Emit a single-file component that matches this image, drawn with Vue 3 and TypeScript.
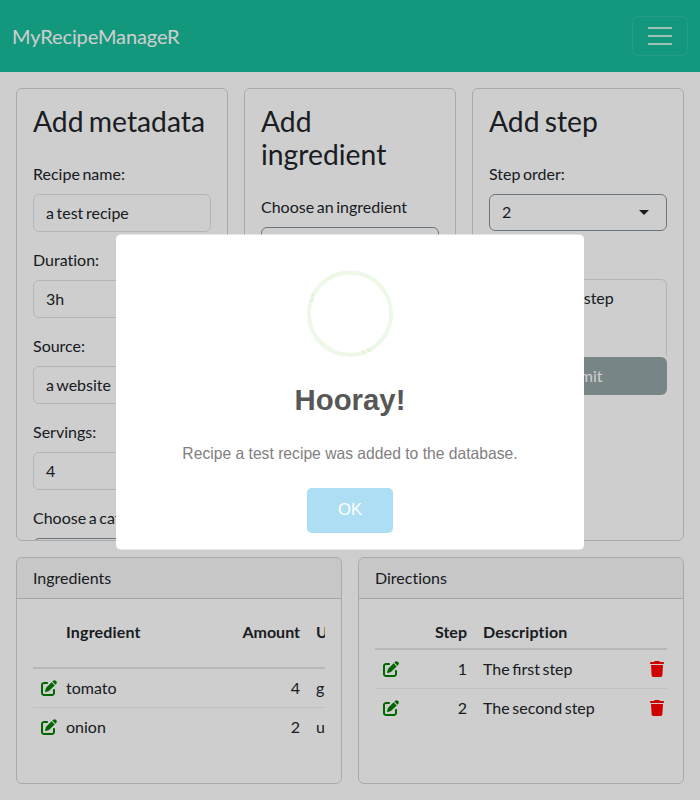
<script setup lang="ts">
interface Field {
  label: string
  value: string
}
interface Ingredient {
  name: string
  amount: number
  unit: string
}

const fields: Field[] = [
  { label: 'Recipe name:', value: 'a test recipe' },
  { label: 'Duration:', value: '3h' },
  { label: 'Source:', value: 'a website' },
  { label: 'Servings:', value: '4' },
]
const ingredients: Ingredient[] = [
  { name: 'tomato', amount: 4, unit: 'g' },
  { name: 'onion', amount: 2, unit: 'unit' },
]
const steps: string[] = ['The first step', 'The second step']

const penPath =
  'M471.6 21.7c-21.9-21.9-57.3-21.9-79.2 0L362.3 51.7l97.9 97.9 30.1-30.1c21.9-21.9 21.9-57.3 0-79.2L471.6 21.7zm-299.2 220c-6.1 6.1-10.8 13.6-13.5 21.9l-29.6 88.8c-2.9 8.6-.6 18.1 5.8 24.6s15.9 8.7 24.6 5.8l88.8-29.6c8.2-2.7 15.7-7.4 21.9-13.5L437.7 172.3 339.7 74.3 172.4 241.7zM96 64C43 64 0 107 0 160V416c0 53 43 96 96 96H352c53 0 96-43 96-96V320c0-17.7-14.3-32-32-32s-32 14.3-32 32v96c0 17.7-14.3 32-32 32H96c-17.7 0-32-14.3-32-32V160c0-17.7 14.3-32 32-32h96c17.7 0 32-14.3 32-32s-14.3-32-32-32H96z'
const trashPath =
  'M135.2 17.7L128 32H32C14.3 32 0 46.3 0 64S14.3 96 32 96H416c17.7 0 32-14.3 32-32s-14.3-32-32-32H320l-7.2-14.3C307.4 6.8 296.3 0 284.2 0H163.8c-12.1 0-23.2 6.8-28.6 17.7zM416 128H32L53.2 467c1.6 25.3 22.6 45 47.9 45H346.9c25.3 0 46.3-19.7 47.9-45L416 128z'
</script>

<template>
  <div class="page">
    <nav class="navbar">
      <span class="brand">MyRecipeManageR</span>
      <button class="toggler" type="button">
        <svg width="30" height="30" viewBox="0 0 30 30">
          <path d="M3 7h24M3 15h24M3 23h24" stroke="#fff" stroke-opacity=".75" stroke-width="2" />
        </svg>
      </button>
    </nav>

    <main class="content">
      <section class="forms">
        <div class="card form-card">
          <h2>Add metadata</h2>
          <div v-for="f in fields" :key="f.label" class="group">
            <label>{{ f.label }}</label>
            <div class="control">{{ f.value }}</div>
          </div>
          <div class="group">
            <label>Choose a category</label>
            <div class="control select"></div>
          </div>
        </div>

        <div class="card form-card">
          <h2>Add ingredient</h2>
          <div class="group">
            <label>Choose an ingredient</label>
            <div class="control select"></div>
          </div>
        </div>

        <div class="card form-card">
          <h2>Add step</h2>
          <div class="group">
            <label>Step order:</label>
            <div class="control select"><span>2</span><i class="caret"></i></div>
          </div>
          <div class="group describe">
            <label>Description:</label>
            <div class="control area">The second step</div>
          </div>
          <button class="submit" type="button">Submit</button>
        </div>
      </section>

      <section class="tables">
        <div class="card">
          <header>Ingredients</header>
          <div class="body">
            <div class="table">
              <div class="row ing head tall">
                <span></span><span>Ingredient</span><span class="num">Amount</span><span>Unit</span>
              </div>
              <div v-for="i in ingredients" :key="i.name" class="row ing">
                <svg class="icon edit" viewBox="0 0 512 512"><path :d="penPath" /></svg>
                <span>{{ i.name }}</span><span class="num">{{ i.amount }}</span><span>{{ i.unit }}</span>
              </div>
            </div>
          </div>
        </div>

        <div class="card">
          <header>Directions</header>
          <div class="body">
            <div class="table">
              <div class="row dir head">
                <span></span><span class="num">Step</span><span>Description</span><span></span>
              </div>
              <div v-for="(s, n) in steps" :key="s" class="row dir">
                <svg class="icon edit" viewBox="0 0 512 512"><path :d="penPath" /></svg>
                <span class="num">{{ n + 1 }}</span><span>{{ s }}</span>
                <svg class="icon trash" viewBox="0 0 448 512"><path :d="trashPath" /></svg>
              </div>
            </div>
          </div>
        </div>
      </section>
    </main>

    <div class="overlay">
      <div class="modal">
        <svg class="success" width="88" height="88" viewBox="0 0 88 88">
          <circle cx="44" cy="44" r="42" fill="none" stroke="#a5dc86" stroke-opacity=".2" stroke-width="4" />
          <path
            d="M3.500 31l3-2M4.500 26l3-2M56.500 82l3 3M61.500 80l3 3"
            fill="none"
            stroke="#8fc573"
            stroke-opacity=".6"
            stroke-width=".8"
            stroke-dasharray="1.200 .6"
          />
        </svg>
        <h3>Hooray!</h3>
        <p>Recipe a test recipe was added to the database.</p>
        <button class="ok" type="button">OK</button>
      </div>
    </div>
  </div>
</template>

<style>
body {
  margin: 0;
  overflow: hidden;
}
</style>

<style scoped>
* {
  box-sizing: border-box;
}
.page {
  position: relative;
  display: flex;
  flex-direction: column;
  height: 800px;
  background: #fff;
  color: #212529;
  font: 16px/24px Lato, sans-serif;
  word-spacing: -1.5px;
}
button {
  font-family: inherit;
}
.navbar {
  display: flex;
  align-items: center;
  justify-content: space-between;
  height: 72px;
  padding: 0 12px;
  background: #18bc9c;
}
.brand {
  color: #fff;
  font-size: 20px;
  line-height: 30px;
  letter-spacing: -0.1px;
  padding-bottom: 1px;
}
.toggler {
  display: flex;
  padding: 4px 12px;
  border: 1px solid rgba(255, 255, 255, 0.1);
  border-radius: 6px;
  background: none;
}
.content {
  flex: 1;
  display: grid;
  grid-template-rows: 453px 227px;
  gap: 16px;
  padding: 16px;
}
.forms,
.tables {
  display: grid;
  gap: 16px;
  min-height: 0;
}
.forms {
  grid-template-columns: repeat(3, 1fr);
}
.tables {
  grid-template-columns: repeat(2, 1fr);
}
.card {
  min-width: 0;
  border: 1px solid rgba(0, 0, 0, 0.175);
  border-radius: 6px;
  overflow: hidden;
}
.form-card {
  padding: 16px;
}
h2 {
  margin: 0 0 24px;
  font-size: 28.3px;
  line-height: 33px;
  font-weight: 400;
  word-spacing: -2px;
}
.group {
  margin-bottom: 16px;
}
label {
  display: block;
  margin-bottom: 8px;
  font-variant-ligatures: none;
}
.control {
  height: 38px;
  padding: 6px 12px;
  border: 1px solid #dee2e6;
  border-radius: 6px;
}
.select {
  display: flex;
  align-items: center;
  justify-content: space-between;
  height: 37px;
  padding: 5px 17px 6px 12px;
  border-color: #85919b;
}
.caret {
  border: 5px solid transparent;
  border-top-color: #212529;
  border-bottom: 0;
}
.describe {
  margin-bottom: 0;
}
.area {
  height: 78px;
  border-bottom: 0;
  border-radius: 6px 6px 0 0;
}
.submit {
  display: block;
  width: 100%;
  height: 38px;
  padding: 0 0 2px;
  border: 0;
  border-radius: 6px;
  background: #95a5a6;
  color: #fff;
  font-size: 16px;
}
header {
  padding: 8px 16px;
  border-bottom: 1px solid rgba(0, 0, 0, 0.175);
  background: rgba(0, 0, 0, 0.03);
  font-variant-ligatures: none;
}
.body {
  padding: 16px;
}
.table {
  overflow: hidden;
}
.row {
  display: grid;
  align-items: center;
  height: 39px;
  border-bottom: 1px solid #eee;
}
.row:last-child {
  border-bottom-color: transparent;
}
.row.head {
  align-items: start;
  height: 35px;
  padding-top: 5px;
  border-bottom: 2px solid #e4e4e4;
  font-weight: 700;
  font-variant-ligatures: none;
}
.row.head span:not(.num) {
  letter-spacing: 0.18px;
}
.row.head.tall {
  height: 54px;
}
.ing {
  grid-template-columns: 33px 144px 90px 60px;
}
.dir {
  grid-template-columns: 33px 59px 183px 17px;
}
.ing span:nth-child(4),
.dir span:nth-child(3) {
  padding-left: 16px;
}
.num {
  text-align: right;
}
.icon {
  height: 16px;
  overflow: visible;
}
.edit {
  width: 16px;
  margin-left: 8px;
  fill: green;
}
.trash {
  width: 14px;
  fill: red;
}
.overlay {
  position: absolute;
  inset: 0;
  display: flex;
  align-items: center;
  justify-content: center;
  padding-bottom: 16px;
  background: rgba(0, 0, 0, 0.192);
}
.modal {
  display: flex;
  flex-direction: column;
  align-items: center;
  width: 478px;
  height: 322px;
  padding: 37px 17px 17px;
  border-radius: 5px;
  background: #fff;
  font-family: 'Liberation Sans', sans-serif;
  word-spacing: 0;
  transform: scale(0.979);
}
.success {
  flex: none;
}
h3 {
  margin: 24px 0 25px;
  color: #575757;
  font-size: 30px;
  line-height: 40px;
  font-weight: 600;
}
p {
  margin: 0;
  color: #808080;
  font-size: 16px;
  line-height: 20px;
}
.ok {
  width: 88px;
  height: 46px;
  margin-top: 25px;
  padding: 0;
  border: 0;
  border-radius: 5px;
  background: #aedef4;
  color: #fff;
  font-size: 17px;
}
</style>
